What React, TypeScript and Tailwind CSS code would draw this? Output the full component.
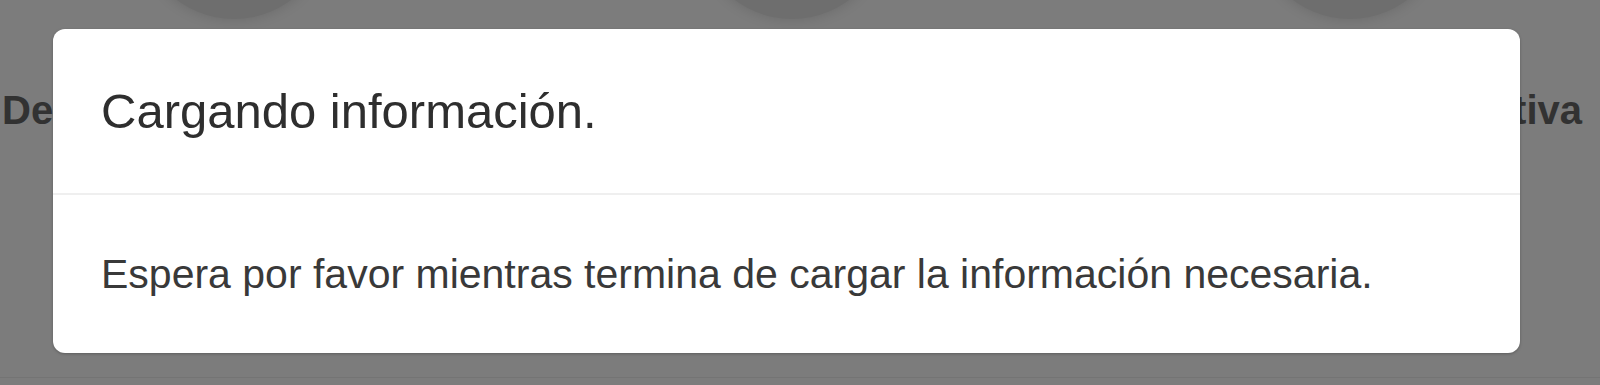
const columns = [
  { label: "Declaración mensual", align: "self-start" },
  { label: "Constancia fiscal", align: "self-center" },
  { label: "Declaración informativa", align: "self-end" },
];

const App = () => {
  return (
    <div className="relative h-[385px] w-[1600px] overflow-hidden bg-[#f8f8f8] font-['Liberation_Sans',Arial,sans-serif]">
      {/* Page behind the overlay */}
      <div className="flex h-[378px] gap-[94px] border-b border-[#e8e8e8] pl-[2px]">
        {columns.map((col) => (
          <div key={col.label} className="flex w-[464px] flex-col items-center">
            <div className="-mt-[171px] h-[190px] w-[190px] shrink-0 rounded-full bg-[#dcdcdc] shadow-[0_0_14px_rgba(0,0,0,0.14)]" />
            <p
              className={`mt-[70px] whitespace-nowrap text-[40px] font-bold leading-[42px] text-[#646464] ${col.align}`}
            >
              {col.label}
            </p>
          </div>
        ))}
      </div>

      {/* Loading dialog */}
      <div className="absolute inset-0 bg-black/50 pl-[53px] pt-[29px]">
        <div className="w-[1467px] overflow-hidden rounded-[12px] bg-white shadow-[0_1px_3px_rgba(0,0,0,0.25)]">
          <div className="flex h-[166px] items-center border-b-2 border-[#efefef] pl-[48px]">
            <h2 className="text-[49px] leading-none text-[#2e2e2e]">Cargando información.</h2>
          </div>
          <div className="flex h-[158px] items-center pl-[48px]">
            <p className="text-[41px] leading-none text-[#393939]">
              Espera por favor mientras termina de cargar la información necesaria.
            </p>
          </div>
        </div>
      </div>
    </div>
  );
};

export default App;
